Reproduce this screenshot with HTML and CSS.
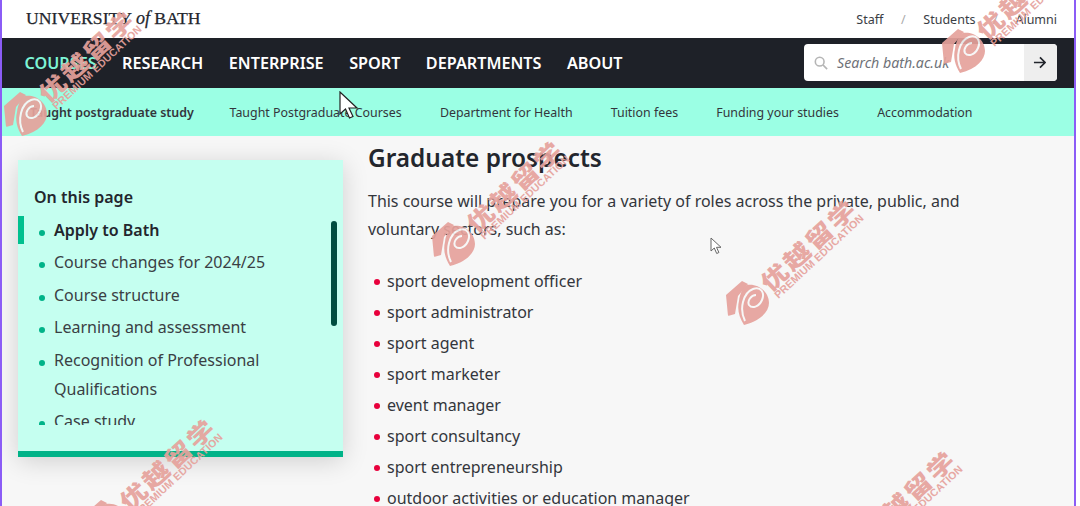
FILE: index.html
```html
<!DOCTYPE html>
<html lang="en">
<head>
    <meta charset="UTF-8">
    <meta name="viewport" content="width=device-width, initial-scale=1.0">
    <title>Graduate prospects - University of Bath</title>
    <link rel="stylesheet" href="styles.css">
</head>
<body>
    <div class="frame">
        <header class="topbar">
            <div class="logo">UNIVERSITY <i>of</i> BATH</div>
            <div class="audience">
                <a>Staff</a>
                <span class="slash">/</span>
                <a>Students</a>
                <span class="slash">/</span>
                <a>Alumni</a>
            </div>
        </header>

        <nav class="mainnav">
            <ul class="mainnav-links">
                <li class="current">Courses</li>
                <li>Research</li>
                <li>Enterprise</li>
                <li>Sport</li>
                <li>Departments</li>
                <li>About</li>
            </ul>
            <div class="search">
                <svg class="search-icon" width="14" height="14" viewBox="0 0 16 16" fill="none" stroke="#b5b5b5" stroke-width="1.8"><circle cx="6.500" cy="6.500" r="5"/><path d="M10.200 10.200 15 15"/></svg>
                <span class="search-text">Search bath.ac.uk</span>
                <span class="search-go">
                    <svg width="13" height="13" viewBox="0 0 14 14" fill="none" stroke="#23262d" stroke-width="1.800"><path d="M1 7h11.500M7.500 1.500 13 7l-5.500 5.500"/></svg>
                </span>
            </div>
        </nav>

        <nav class="subnav">
            <a class="subnav-title">Taught postgraduate study</a>
            <a>Taught Postgraduate Courses</a>
            <a>Department for Health</a>
            <a>Tuition fees</a>
            <a>Funding your studies</a>
            <a>Accommodation</a>
        </nav>

        <main class="content">
            <aside class="toc">
                <h3>On this page</h3>
                <div class="toc-scroll">
                    <ul>
                        <li class="active">Apply to Bath</li>
                        <li>Course changes for 2024/25</li>
                        <li>Course structure</li>
                        <li>Learning and assessment</li>
                        <li>Recognition of Professional Qualifications</li>
                        <li>Case study</li>
                    </ul>
                </div>
                <span class="toc-thumb"></span>
            </aside>

            <article class="article">
                <h2>Graduate prospects</h2>
                <p>This course will prepare you for a variety of roles across the private, public, and voluntary sectors, such as:</p>
                <ul>
                    <li>sport development officer</li>
                    <li>sport administrator</li>
                    <li>sport agent</li>
                    <li>sport marketer</li>
                    <li>event manager</li>
                    <li>sport consultancy</li>
                    <li>sport entrepreneurship</li>
                    <li>outdoor activities or education manager</li>
                </ul>
            </article>
        </main>
    </div>

    <!-- mouse pointers caught in the capture -->
    <svg class="cursor cursor-big" width="20" height="28" viewBox="0 0 20 28"><path d="M1 1v22l5.500-5 4 9 3.500-1.500-4-8.500H18z" fill="#fff" stroke="#222" stroke-width="1.200"/></svg>
    <svg class="cursor cursor-small" width="13" height="18" viewBox="0 0 13 18"><path d="M1 1v13l3.300-3 2.400 5.500 2.200-1-2.400-5.200H11z" fill="#fff" stroke="#666" stroke-width="1"/></svg>

    <!-- watermark mark, reused by each stamp -->
    <svg class="wm-defs" width="0" height="0">
        <symbol id="wm-mark" viewBox="0 0 46 48">
            <g transform="rotate(43 23 24)">
                <path class="wm-shape" d="M1 16 17 2l6 3-10 12-3 18-7 2z"/>
                <path class="wm-shape" d="M22 6c10-2 22 6 22 18 0 8-8 18-25 22-5-8-7-16-5-24 1-8 4-14 8-16z"/>
                <path class="wm-swirl" d="M20 42c-6-12-2-28 8-32 8-3 12 4 9 11-3 7-10 9-13 5-2-4 2-10 7-10"/>
            </g>
        </symbol>
    </svg>

    <!-- watermark stamps -->
    <div class="wm wm-a">
        <svg class="wm-logo" width="46" height="48"><use href="#wm-mark"/></svg>
        <div class="wm-text"><b>优越留学</b><span>PREMIUM EDUCATION</span></div>
    </div>
    <div class="wm wm-b">
        <svg class="wm-logo" width="46" height="48"><use href="#wm-mark"/></svg>
        <div class="wm-text"><b>优越留学</b><span>PREMIUM EDUCATION</span></div>
    </div>
    <div class="wm wm-c">
        <svg class="wm-logo" width="46" height="48"><use href="#wm-mark"/></svg>
        <div class="wm-text"><b>优越留学</b><span>PREMIUM EDUCATION</span></div>
    </div>
    <div class="wm wm-d">
        <svg class="wm-logo" width="46" height="48"><use href="#wm-mark"/></svg>
        <div class="wm-text"><b>优越留学</b><span>PREMIUM EDUCATION</span></div>
    </div>
    <div class="wm wm-e">
        <svg class="wm-logo" width="46" height="48"><use href="#wm-mark"/></svg>
        <div class="wm-text"><b>优越留学</b><span>PREMIUM EDUCATION</span></div>
    </div>
    <div class="wm wm-f">
        <svg class="wm-logo" width="46" height="48"><use href="#wm-mark"/></svg>
        <div class="wm-text"><b>优越留学</b><span>PREMIUM EDUCATION</span></div>
    </div>
</body>
</html>
```

FILE: styles.css
```css
html, body {
    margin: 0;
    height: 506px;
    overflow: hidden;
    background: #fff;
}
body {
    position: relative;
    font-family: "Noto Sans", Arial, sans-serif;
    color: #2b2e35;
}
ul {
    list-style: none;
    margin: 0;
    padding: 0;
}
.frame {
    width: 1076px;
    height: 506px;
    box-sizing: border-box;
    border-left: 2px solid #8b5cf6;
    border-right: 2px solid #8b5cf6;
    background: #f7f7f7;
    display: flex;
    flex-direction: column;
    overflow: hidden;
}

/* top white strip */
.topbar {
    height: 38px;
    flex: none;
    background: #fff;
    display: flex;
    justify-content: space-between;
    align-items: center;
    padding: 0 17px 2px 24px;
    box-sizing: border-box;
}
.logo {
    font-family: "Liberation Serif", serif;
    font-size: 17.700px;
    color: #23262d;
    -webkit-text-stroke: .25px #23262d;
}
.logo i {
    font-size: 18px;
}
.audience {
    display: flex;
    gap: 17.700px;
    margin-top: 2px;
    font-size: 12.500px;
    color: #3a3d44;
}
.slash {
    color: #aaa;
}

/* dark nav */
.mainnav {
    height: 50px;
    flex: none;
    background: #1e2128;
    display: flex;
    justify-content: space-between;
    align-items: center;
    padding: 0 17px 1px 22.500px;
    box-sizing: border-box;
}
.mainnav-links {
    display: flex;
    gap: 25.500px;
    font-size: 16.200px;
    font-weight: 600;
    text-transform: uppercase;
    color: #fff;
}
.mainnav-links .current {
    color: #7df5d6;
}
.search {
    width: 253px;
    height: 37px;
    background: #fff;
    border-radius: 4px;
    display: flex;
    align-items: center;
    overflow: hidden;
}
.search-icon {
    margin-left: 10px;
}
.search-text {
    flex: 1;
    margin-left: 9px;
    font-size: 14.200px;
    font-style: italic;
    color: #6f7278;
}
.search-go {
    width: 33px;
    height: 37px;
    padding-right: 3px;
    box-sizing: border-box;
    background: #eee;
    display: flex;
    align-items: center;
    justify-content: center;
}

/* mint section nav */
.subnav {
    height: 48px;
    flex: none;
    background: #9bffe4;
    display: flex;
    align-items: center;
    gap: 38.200px;
    padding-left: 28px;
    font-size: 12.400px;
    color: #33363c;
}
.subnav-title {
    font-weight: 600;
    margin-right: -2.500px;
}

/* page body */
.content {
    flex: 1;
    display: flex;
    align-items: flex-start;
    min-height: 0;
}
.toc {
    position: relative;
    width: 325px;
    height: 297px;
    flex: none;
    box-sizing: border-box;
    margin: 24px 0 0 16px;
    padding-top: 25px;
    background: #c5fff0;
    border-bottom: 6px solid #00b388;
    box-shadow: 0 4px 24px rgba(0, 0, 0, .16);
}
.toc h3 {
    margin: 0 0 7px 16px;
    font-size: 16px;
    line-height: 24px;
    font-weight: 600;
    color: #23262d;
}
.toc-scroll {
    height: 209px;
    overflow: hidden;
}
.toc li {
    position: relative;
    padding: 0 70px 3.400px 36px;
    font-size: 16px;
    line-height: 29px;
    color: #3a4044;
}
.toc li::before {
    content: "";
    position: absolute;
    left: 21px;
    top: 14px;
    width: 6px;
    height: 6px;
    border-radius: 50%;
    background: #00b388;
}
.toc li.active {
    font-weight: 600;
    color: #23262d;
}
.toc li.active::after {
    content: "";
    position: absolute;
    left: 0;
    top: 0;
    width: 6px;
    height: 28px;
    background: #00c08f;
}
.toc-thumb {
    position: absolute;
    right: 6px;
    top: 61px;
    width: 6px;
    height: 105px;
    border-radius: 3px;
    background: #004d40;
}
.article {
    margin-left: 25px;
    width: 600px;
    color: #33363c;
}
.article h2 {
    margin: 6px 0 12.500px;
    font-size: 24.400px;
    line-height: 32px;
    font-weight: 600;
    color: #23262d;
}
.article p {
    margin: 0 0 23.500px;
    font-size: 15.980px;
    line-height: 28px;
}
.article li {
    position: relative;
    padding-left: 19px;
    font-size: 16px;
    line-height: 31px;
}
.article li::before {
    content: "";
    position: absolute;
    left: 6px;
    top: 13px;
    width: 6px;
    height: 6px;
    border-radius: 50%;
    background: #e8003c;
}

/* overlays */
.cursor {
    position: absolute;
}
.cursor-big {
    left: 339px;
    top: 91px;
}
.cursor-small {
    left: 710px;
    top: 237px;
}
.wm-defs {
    position: absolute;
}
.wm {
    position: absolute;
    display: flex;
    align-items: flex-start;
    width: 200px;
    height: 48px;
    transform: rotate(-43deg);
    transform-origin: 23px 24px;
    opacity: .92;
    white-space: nowrap;
    pointer-events: none;
}
.wm-a { left: 3px; top: 90px; }
.wm-b { left: 431px; top: 220px; }
.wm-c { left: 725px; top: 279px; }
.wm-d { left: 941px; top: 27px; }
.wm-e { left: 84px; top: 498px; }
.wm-f { left: 824px; top: 530px; }
.wm-logo {
    flex: none;
}
.wm-shape {
    fill: #e6a29c;
}
.wm-swirl {
    fill: none;
    stroke: #f7f7f7;
    stroke-width: 2;
}
.wm-text {
    display: flex;
    flex-direction: column;
    margin: 11px 0 0;
    color: #e6a29c;
}
.wm-text b {
    display: block;
    height: 22px;
    font-family: "Noto Sans CJK SC", sans-serif;
    font-size: 28px;
    line-height: 22px;
    letter-spacing: 2.500px;
    font-weight: 900;
    transform: scaleY(.82);
}
.wm-text span {
    margin-left: 2px;
    font-family: "Liberation Sans", Arial, sans-serif;
    font-size: 10.500px;
    line-height: 11px;
    letter-spacing: .2px;
    font-weight: 700;
}
```
